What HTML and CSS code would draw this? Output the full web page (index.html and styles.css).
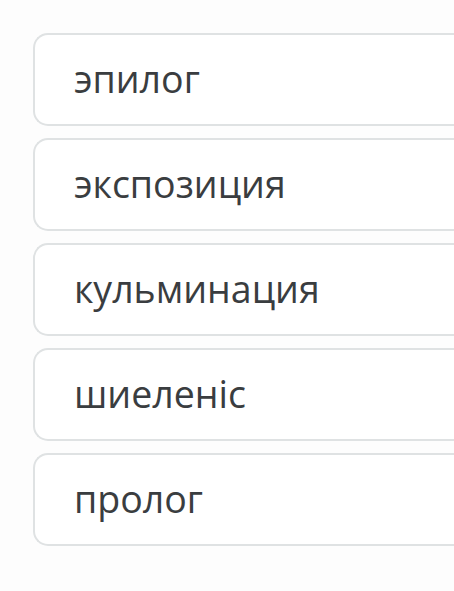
FILE: index.html
```html
<!DOCTYPE html>
<html lang="ru">
<head>
<meta charset="utf-8">
<link rel="stylesheet" href="styles.css">
</head>
<body>
<div class="options">
  <div class="option">эпилог</div>
  <div class="option">экспозиция</div>
  <div class="option">кульминация</div>
  <div class="option">шиеленіс</div>
  <div class="option">пролог</div>
</div>
</body>
</html>
```
FILE: styles.css
```css
html, body {
  margin: 0;
  height: 100%;
  background: #fdfdfd;
  overflow: hidden;
}

.options {
  display: flex;
  flex-direction: column;
  gap: 12px;
  padding: 33px 0 0 33px;
}

/* answer cards run off the right edge, so only the left corners are rounded */
.option {
  box-sizing: border-box;
  height: 93px;
  display: flex;
  align-items: center;
  padding-left: 39px;
  padding-bottom: 2px;
  border: 2px solid #dfe2e3;
  border-right: none;
  border-radius: 15px 0 0 15px;
  background: #ffffff;
  font-family: "Open Sans", sans-serif;
  font-size: 37.5px;
  color: #3a3d40;
}
```
